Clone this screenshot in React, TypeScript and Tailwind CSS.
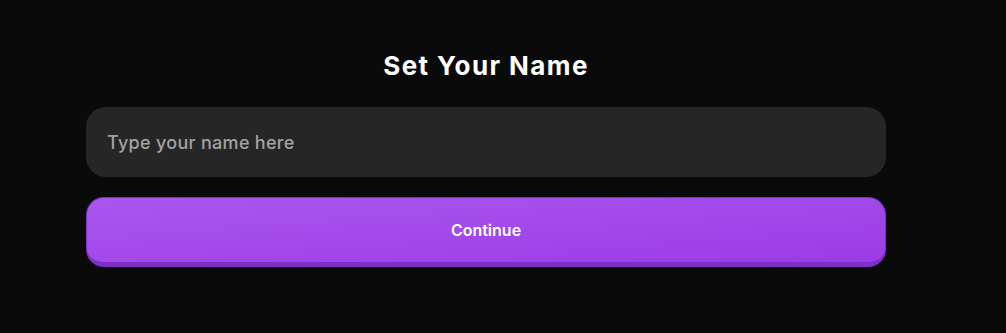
export default function App() {
  return (
    <div className="min-h-[333px] w-full bg-[#0a0a0a] font-['Inter',sans-serif]">
      <div className="flex w-[800px] flex-col ml-[86px] pt-[49px]">
        <h1 className="text-center text-[26px] font-bold leading-[34px] tracking-[1.4px] text-white">Set Your Name</h1>
        <input
          type="text"
          placeholder="Type your name here"
          className="mt-[24px] h-[70px] w-full rounded-[20px] bg-[#262626] px-[21px] text-[18px] font-medium tracking-[0.3px] text-white placeholder:text-[#a3a3a3] outline-none"
        />
        <button className="mt-[20px] h-[70px] w-full rounded-[18px] border-[1.5px] border-b-[5px] border-[#7e2fc6] bg-gradient-to-br from-[#a956ee] to-[#9b3be6] text-[16px] font-semibold text-white">
          Continue
        </button>
      </div>
    </div>
  )
}
